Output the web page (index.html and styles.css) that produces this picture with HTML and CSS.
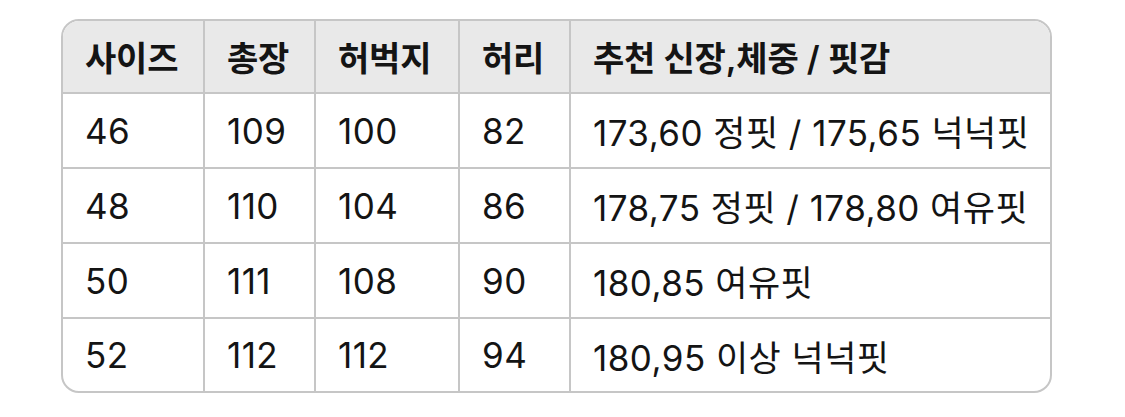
FILE: index.html
```html
<!DOCTYPE html>
<html lang="ko">
<head>
<meta charset="utf-8">
<title>사이즈표</title>
<link rel="stylesheet" href="styles.css">
</head>
<body>
<div class="sheet">
  <div class="cell head">사이즈</div>
  <div class="cell head">총장</div>
  <div class="cell head">허벅지</div>
  <div class="cell head">허리</div>
  <div class="cell head last">추천 신장,체중 / 핏감</div>

  <div class="cell">46</div>
  <div class="cell">109</div>
  <div class="cell">100</div>
  <div class="cell">82</div>
  <div class="cell last">173,60 정핏 / 175,65 넉넉핏</div>

  <div class="cell">48</div>
  <div class="cell">110</div>
  <div class="cell">104</div>
  <div class="cell">86</div>
  <div class="cell last">178,75 정핏 / 178,80 여유핏</div>

  <div class="cell">50</div>
  <div class="cell">111</div>
  <div class="cell">108</div>
  <div class="cell">90</div>
  <div class="cell last">180,85 여유핏</div>

  <div class="cell bottom">52</div>
  <div class="cell bottom">112</div>
  <div class="cell bottom">112</div>
  <div class="cell bottom">94</div>
  <div class="cell bottom last">180,95 이상 넉넉핏</div>
</div>
</body>
</html>
```

FILE: styles.css
```css
html, body {
  margin: 0;
  padding: 0;
  background: #ffffff;
}

body {
  font-family: "Inter", "Noto Sans CJK KR", sans-serif;
  color: #141414;
}

.sheet {
  margin: 19px 0 0 61px;
  width: 991px;
  box-sizing: border-box;
  border: 2px solid #c6c6c6;
  border-radius: 18px;
  overflow: hidden;
  display: grid;
  grid-template-columns: 142px 111px 144px 111px 1fr;
  grid-template-rows: 73px 75px 75px 75px 72px;
}

.cell {
  display: flex;
  align-items: center;
  box-sizing: border-box;
  padding-left: 22px;
  border-right: 2px solid #c6c6c6;
  border-bottom: 2px solid #c6c6c6;
  font-size: 35px;
  font-weight: 400;
  letter-spacing: 0.45px;
  white-space: nowrap;
}

.cell.head {
  background: #e9e9e9;
  font-size: 34px;
  font-weight: 600;
  letter-spacing: -0.2px;
}

.cell.last {
  border-right: none;
}

.cell.bottom {
  border-bottom: none;
}
```
